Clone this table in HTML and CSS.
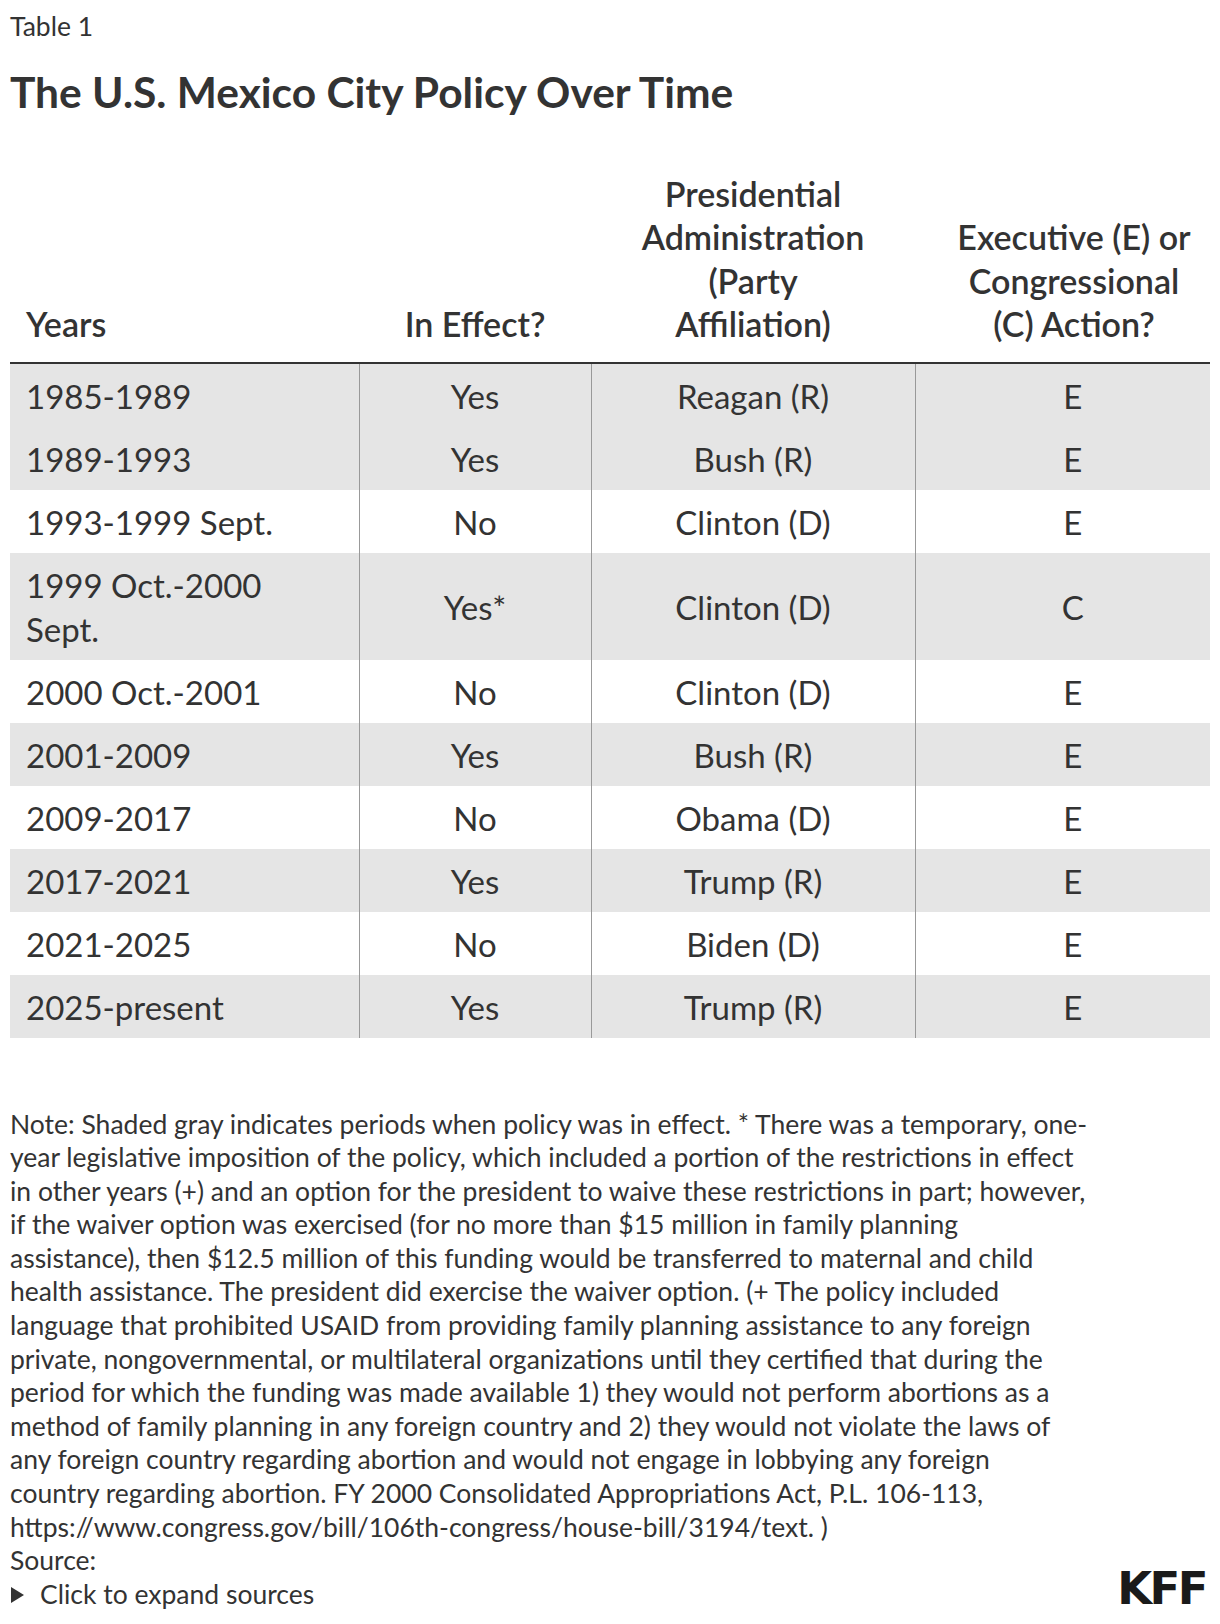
FILE: index.html
```html
<!DOCTYPE html>
<html lang="en">
<head>
<meta charset="utf-8">
<title>The U.S. Mexico City Policy Over Time</title>
<link rel="stylesheet" href="styles.css">
</head>
<body>
<main class="figure">
  <div class="eyebrow">Table 1</div>
  <h1 class="title">The U.S. Mexico City Policy Over Time</h1>

  <table class="policy">
    <colgroup>
      <col class="c-years">
      <col class="c-effect">
      <col class="c-admin">
      <col class="c-action">
    </colgroup>
    <thead>
      <tr>
        <th class="left">Years</th>
        <th class="mid">In Effect?</th>
        <th class="admin">Presidential Administration (Party Affiliation)</th>
        <th class="action">Executive (E) or Congressional (C) Action?</th>
      </tr>
    </thead>
    <tbody>
      <tr class="on"><td class="left">1985-1989</td><td class="mid">Yes</td><td class="mid">Reagan (R)</td><td class="action">E</td></tr>
      <tr class="on"><td class="left">1989-1993</td><td class="mid">Yes</td><td class="mid">Bush (R)</td><td class="action">E</td></tr>
      <tr><td class="left">1993-1999 Sept.</td><td class="mid">No</td><td class="mid">Clinton (D)</td><td class="action">E</td></tr>
      <tr class="on"><td class="left">1999 Oct.-2000 Sept.</td><td class="mid">Yes*</td><td class="mid">Clinton (D)</td><td class="action">C</td></tr>
      <tr><td class="left">2000 Oct.-2001</td><td class="mid">No</td><td class="mid">Clinton (D)</td><td class="action">E</td></tr>
      <tr class="on"><td class="left">2001-2009</td><td class="mid">Yes</td><td class="mid">Bush (R)</td><td class="action">E</td></tr>
      <tr><td class="left">2009-2017</td><td class="mid">No</td><td class="mid">Obama (D)</td><td class="action">E</td></tr>
      <tr class="on"><td class="left">2017-2021</td><td class="mid">Yes</td><td class="mid">Trump (R)</td><td class="action">E</td></tr>
      <tr><td class="left">2021-2025</td><td class="mid">No</td><td class="mid">Biden (D)</td><td class="action">E</td></tr>
      <tr class="on"><td class="left">2025-present</td><td class="mid">Yes</td><td class="mid">Trump (R)</td><td class="action">E</td></tr>
    </tbody>
  </table>

  <footer class="notes">
    <p class="note">Note: Shaded gray indicates periods when policy was in effect. * There was a temporary, one-year legislative imposition of the policy, which included a portion of the restrictions in effect in other years (+) and an option for the president to waive these restrictions in part; however, if the waiver option was exercised (for no more than $15 million in family planning assistance), then $12.5 million of this funding would be transferred to maternal and child health assistance. The president did exercise the waiver option. (+ The policy included language that prohibited USAID from providing family planning assistance to any foreign private, nongovernmental, or multilateral organizations until they certified that during the period for which the funding was made available 1) they would not perform abortions as a method of family planning in any foreign country and 2) they would not violate the laws of any foreign country regarding abortion and would not engage in lobbying any foreign<br>country regarding abortion. FY 2000 Consolidated Appropriations Act, P.L. 106-113, https://www.congress.gov/bill/106th-congress/house-bill/3194/text. )</p>
    <div class="source-row">
      <div class="source">
        <div>Source:</div>
        <details class="expand">
          <summary><span class="tri"></span>Click to expand sources</summary>
        </details>
      </div>
      <div class="logo">KFF</div>
    </div>
  </footer>
</main>
</body>
</html>
```

FILE: styles.css
```css
html, body {
  margin: 0;
  padding: 0;
  background: #ffffff;
}

body {
  font-family: "Lato", "Noto Sans", sans-serif;
  color: #333333;
}

.figure {
  width: 1200px;
  padding: 10px 10px 0 10px;
}

.eyebrow {
  font-size: 26.5px;
  line-height: 32px;
  color: #333333;
}

.title {
  margin: 26px 0 0 0;
  font-size: 42.5px;
  line-height: 48px;
  font-weight: 700;
  color: #333333;
}

.policy {
  margin-top: 55.5px;
  width: 1200px;
  table-layout: fixed;
  border-collapse: collapse;
  border-spacing: 0;
}

.c-years { width: 349px; }
.c-effect { width: 232px; }
.c-admin { width: 324px; }
.c-action { width: 295px; }

.policy th {
  font-weight: 600;
  font-size: 34px;
  line-height: 43.5px;
  vertical-align: bottom;
  padding: 0 0 16px 0;
  border-bottom: 2px solid #333333;
}

.policy td {
  font-size: 33px;
  line-height: 44px;
  padding: 10px 0 9px 0;
  vertical-align: middle;
}

.policy .left {
  text-align: left;
  padding-left: 16px;
  padding-right: 16px;
}

.policy .mid {
  text-align: center;
}

.policy th.admin {
  text-align: center;
  padding-left: 40px;
  padding-right: 40px;
}

.policy .action {
  text-align: center;
  padding-left: 30px;
  padding-right: 10px;
}

.policy th.action {
  padding-left: 38px;
  padding-right: 15px;
}

.policy td + td {
  border-left: 1px solid #999999;
}

.policy tr.on td {
  background: #e5e5e5;
}

.notes {
  margin-top: 70px;
  font-size: 26.5px;
  line-height: 33.6px;
  color: #333333;
}

.note {
  margin: 0;
  max-width: 1080px;
}

.source-row {
  display: flex;
  justify-content: space-between;
  align-items: flex-end;
}

.expand summary {
  list-style: none;
  display: flex;
  align-items: center;
  cursor: pointer;
}

.expand summary::-webkit-details-marker {
  display: none;
}

.tri {
  display: inline-block;
  width: 0;
  height: 0;
  border-top: 8px solid transparent;
  border-bottom: 8px solid transparent;
  border-left: 13px solid #333333;
  margin: 0 16px 0 1px;
}

.logo {
  font-family: "DejaVu Sans", "Liberation Sans", sans-serif;
  font-weight: 700;
  font-size: 45px;
  line-height: 36px;
  letter-spacing: -2.5px;
  color: #1a1a1a;
  padding-bottom: 4px;
  margin-right: 4px;
}
```
